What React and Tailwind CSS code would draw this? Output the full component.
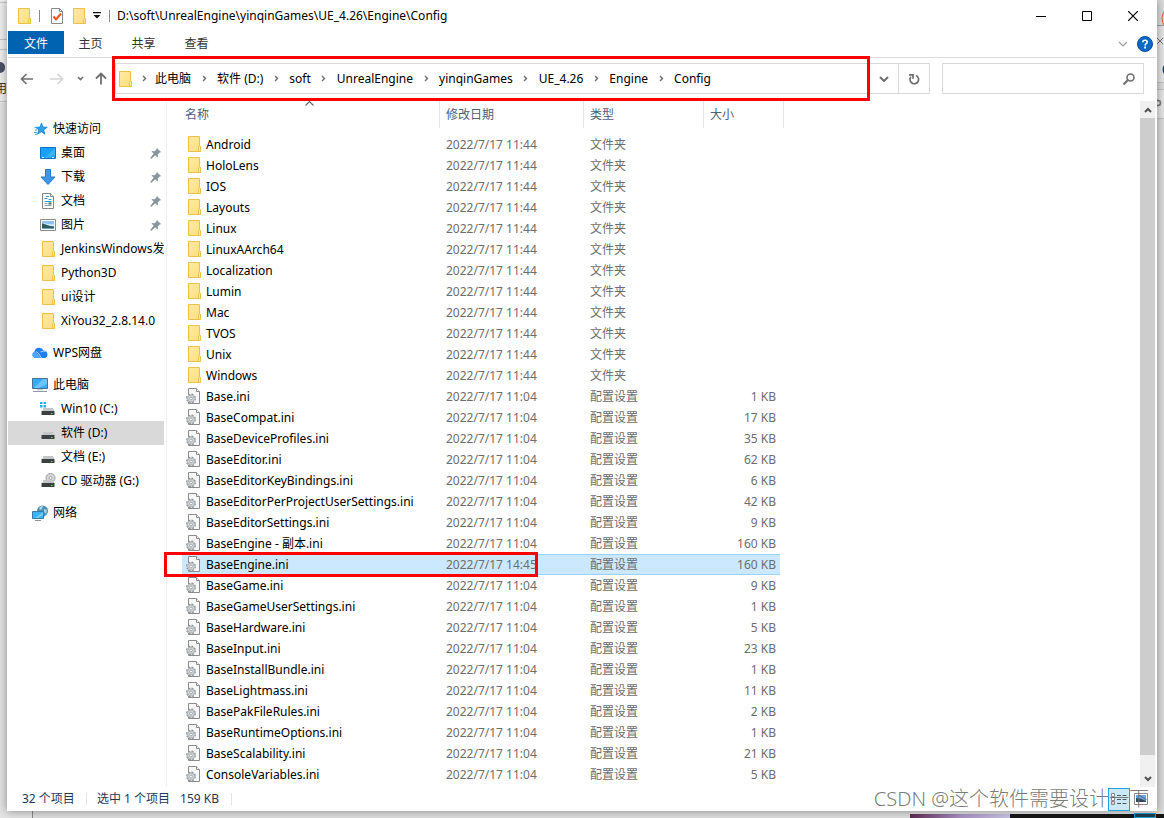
import { useState } from 'react';
import clsx from 'clsx';

const crumbs = ['此电脑', '软件 (D:)', 'soft', 'UnrealEngine', 'yinqinGames', 'UE_4.26', 'Engine', 'Config'];

const folders = [
  'Android', 'HoloLens', 'IOS', 'Layouts', 'Linux', 'LinuxAArch64',
  'Localization', 'Lumin', 'Mac', 'TVOS', 'Unix', 'Windows',
];

const iniFiles = [
  ['Base.ini', 1],
  ['BaseCompat.ini', 17],
  ['BaseDeviceProfiles.ini', 35],
  ['BaseEditor.ini', 62],
  ['BaseEditorKeyBindings.ini', 6],
  ['BaseEditorPerProjectUserSettings.ini', 42],
  ['BaseEditorSettings.ini', 9],
  ['BaseEngine - 副本.ini', 160],
  ['BaseEngine.ini', 160, '2022/7/17 14:45'],
  ['BaseGame.ini', 9],
  ['BaseGameUserSettings.ini', 1],
  ['BaseHardware.ini', 5],
  ['BaseInput.ini', 23],
  ['BaseInstallBundle.ini', 1],
  ['BaseLightmass.ini', 11],
  ['BasePakFileRules.ini', 2],
  ['BaseRuntimeOptions.ini', 1],
  ['BaseScalability.ini', 21],
  ['ConsoleVariables.ini', 5],
];

const rows = [
  ...folders.map((name) => ({ name, date: '2022/7/17 11:44', type: '文件夹', size: '', folder: true })),
  ...iniFiles.map(([name, kb, date]) => ({
    name,
    date: date || '2022/7/17 11:04',
    type: '配置设置',
    size: `${kb} KB`,
  })),
];

function FolderIcon() {
  return (
    <svg width="14" height="16" viewBox="0 0 14 16" className="shrink-0" aria-hidden="true">
      <defs>
        <linearGradient id="folderFill" x1="0" y1="0" x2="1" y2="1">
          <stop offset="0" stopColor="#ffeaa4" />
          <stop offset="1" stopColor="#fddf7c" />
        </linearGradient>
      </defs>
      <path d="M.5.5h11v9l1 1v5H.5z" fill="url(#folderFill)" stroke="#e9c247" />
      <path d="M10.500 15.500v-4l1-2 1 1v5z" fill="#ffe9a0" stroke="#e9c247" />
    </svg>
  );
}

function IniIcon() {
  return (
    <svg width="14" height="16" viewBox="0 0 14 16" className="shrink-0" aria-hidden="true">
      <path d="M2.500.5h8l3 3v12h-11z" fill="#f8f8f9" stroke="#8b8b8b" />
      <path d="M10.500.5v3h3" fill="#fff" stroke="#8b8b8b" />
      <circle cx="5" cy="10.500" r="4.300" fill="#d5d9dc" stroke="#8f9499" strokeWidth="1.300" strokeDasharray="1.900 1.477" />
      <circle cx="5" cy="10.500" r="3.400" fill="#d5d9dc" stroke="#a4a9ad" strokeWidth=".8" />
      <circle cx="5" cy="10.500" r="1.400" fill="#fff" stroke="#8f9499" strokeWidth=".8" />
    </svg>
  );
}

function StarIcon() {
  return (
    <svg width="16" height="16" viewBox="0 0 16 16" className="shrink-0" aria-hidden="true">
      <path d="M9.500 2l1.300 4 4.500.2-3.600 2.600 1.200 4.400-3.600-2.500-3.800 2.500 1.400-4.400-3.300-2.500 4.400-.2z" fill="#2f9fea" stroke="#1583d3" strokeWidth=".8" />
      <path d="M2.500 6.500h3M3 9h2.500M2 11.500h3M3 13.500h2" stroke="#3ba7ee" />
    </svg>
  );
}

function DesktopIcon() {
  return (
    <svg width="16" height="16" viewBox="0 0 16 16" className="shrink-0" aria-hidden="true">
      <path d="M.5 2.500h15v11H.5z" fill="#18a0fb" stroke="#0a74c4" />
      <path d="M15 3v7L7 13h-2z" fill="#3db3ff" />
      <path d="M2 12.500h2M12 12.500h2" stroke="#d6f0ff" />
    </svg>
  );
}

function DownloadIcon() {
  return (
    <svg width="16" height="16" viewBox="0 0 16 16" className="shrink-0" aria-hidden="true">
      <path d="M5.500.5h5v7.500h4.500l-7 7.500-7-7.500h4.500z" fill="#3f97e8" stroke="#2479cc" />
    </svg>
  );
}

function DocumentIcon() {
  return (
    <svg width="16" height="16" viewBox="0 0 16 16" className="shrink-0" aria-hidden="true">
      <path d="M2.500.5h8l3 3v12h-11z" fill="#fff" stroke="#858585" />
      <path d="M10.500.5v3h3" fill="#eee" stroke="#858585" />
      <path d="M6 3.500h3M4.500 5.500h3M8.500 6.500h3M4.500 8.500h7" stroke="#2b97d9" />
      <path d="M4.500 10.500h3M4.500 12.500h7" stroke="#8c9aa5" />
      <path d="M8.500 9.500h3v2h-3z" fill="#35735f" />
    </svg>
  );
}

function PictureIcon() {
  return (
    <svg width="16" height="16" viewBox="0 0 16 16" className="shrink-0" aria-hidden="true">
      <path d="M.5 2.500h15v11H.5z" fill="#fff" stroke="#8d8d8d" />
      <path d="M2 4h12v8H2z" fill="#8fc1f5" />
      <path d="M2 6.500c3-1 5 1 12 1V9H2z" fill="#e4f1fb" />
      <path d="M2 6.500c3 0 5 2.500 12 3V12H2z" fill="#2f5d5d" />
      <path d="M2 11h12v1H2z" fill="#6ba3c9" />
    </svg>
  );
}

function CloudIcon() {
  return (
    <svg width="16" height="16" viewBox="0 0 16 16" className="shrink-0" aria-hidden="true">
      <path d="M3.500 13A3.400 3.400 0 0 1 2.500 6.500 4.800 4.800 0 0 1 11.500 5.500 3.900 3.900 0 0 1 13 13z" fill="#1d7df2" />
      <path d="M9 13l-4.500-6A3.300 3.300 0 0 0 .3 10 3.200 3.200 0 0 0 3.500 13z" fill="#4fa5fb" />
      <path d="M4.500 6.500q2 1 5 6.500M8.500 7q3-1.500 5-.5" fill="none" stroke="#d3e8ff" strokeWidth=".8" />
    </svg>
  );
}

function ComputerIcon() {
  return (
    <svg width="16" height="16" viewBox="0 0 16 16" className="shrink-0" aria-hidden="true">
      <path d="M.5 1.500h15v10H.5z" fill="#35aaf5" stroke="#48728f" />
      <path d="M15 2v5l-8 4h-5L11 2z" fill="#6ac5ff" />
      <path d="M5 12h6v1.500H5z" fill="#c5d0d8" />
      <path d="M1 14.500h14" stroke="#8c9ba6" />
    </svg>
  );
}

function DriveIcon({ windows, disc }) {
  return (
    <svg width="16" height="16" viewBox="0 0 16 16" className="shrink-0" aria-hidden="true">
      {disc && (
        <>
          <circle cx="10.500" cy="5" r="4.500" fill="#dadada" stroke="#999" />
          <circle cx="10.500" cy="5" r="1.500" fill="#fff" stroke="#999" />
        </>
      )}
      <path d="M3.500 7h9.500l1.500 3.500H2z" fill="#c3c6c8" />
      <path d="M1.500 10h13v4h-13z" fill="#3d4043" />
      <path d="M11 12.500h1.500" stroke="#4bea4b" />
      {windows && <path d="M0 1h2.500v2H0zM3.500 1H6v2H3.500zM0 4h2.500v2.500H0zM3.500 4H6v2.500H3.500z" fill="#18b5ea" />}
    </svg>
  );
}

function NetworkIcon() {
  return (
    <svg width="16" height="16" viewBox="0 0 16 16" className="shrink-0" aria-hidden="true">
      <circle cx="10.500" cy="6" r="5.500" fill="#4d91b8" />
      <path d="M7 3q3-3 4-2l-1 3-2 1zM12 4l3 1-1 4-2-2z" fill="#a9d4e6" />
      <path d="M.5 6.500h11v7H.5z" fill="#3bb3fa" stroke="#397ca8" />
      <path d="M11 7v3l-5 3H3z" fill="#73cbff" />
      <path d="M3 15.500h6" stroke="#8498a5" />
    </svg>
  );
}

function PinIcon() {
  return (
    <svg width="11" height="11" viewBox="0 0 11 11" className="shrink-0" aria-hidden="true">
      <path d="M7 .5L10.500 4 9.200 4.500 7.500 6.500V9L5.200 7 1 10.500.5 10 4 5.800 2 3.500h2.500L6.500 2z" fill="#8895a0" stroke="#8895a0" strokeWidth=".7" />
    </svg>
  );
}

const sidebar = [
  {
    label: '快速访问',
    icon: <StarIcon />,
    items: [
      { label: '桌面', icon: <DesktopIcon />, pinned: true },
      { label: '下载', icon: <DownloadIcon />, pinned: true },
      { label: '文档', icon: <DocumentIcon />, pinned: true },
      { label: '图片', icon: <PictureIcon />, pinned: true },
      { label: 'JenkinsWindows发', icon: <FolderIcon /> },
      { label: 'Python3D', icon: <FolderIcon /> },
      { label: 'ui设计', icon: <FolderIcon /> },
      { label: 'XiYou32_2.8.14.0', icon: <FolderIcon /> },
    ],
  },
  { label: 'WPS网盘', icon: <CloudIcon />, items: [] },
  {
    label: '此电脑',
    icon: <ComputerIcon />,
    items: [
      { label: 'Win10 (C:)', icon: <DriveIcon windows /> },
      { label: '软件 (D:)', icon: <DriveIcon />, active: true },
      { label: '文档 (E:)', icon: <DriveIcon /> },
      { label: 'CD 驱动器 (G:)', icon: <DriveIcon disc /> },
    ],
  },
  { label: '网络', icon: <NetworkIcon />, items: [] },
];

function Chevron({ className, d = 'M1 1l4 4 4-4', w = 10, h = 6, stroke = 2 }) {
  return (
    <svg width={w} height={h} viewBox={`0 0 ${w} ${h}`} className={className} fill="none" stroke="currentColor" strokeWidth={stroke} aria-hidden="true">
      <path d={d} />
    </svg>
  );
}

function TitleBar() {
  return (
    <header className="flex h-[31px] shrink-0 items-center">
      <div className="flex items-center pl-[10px]">
        <FolderIcon />
        <span className="ml-[7px] h-3 w-px bg-[#8a8a8a]" />
        <button type="button" aria-label="属性" className="ml-[10px]">
          <svg width="14" height="16" viewBox="0 0 14 16" fill="none" aria-hidden="true">
            <path d="M1.500.5h8l3 3v12h-11z" fill="#fdfdfd" stroke="#8a8a8a" />
            <path d="M9.500.5v3h3" stroke="#8a8a8a" />
            <path d="M3.500 8.500l2.500 3 5-6" stroke="#ea5520" strokeWidth="2" />
          </svg>
        </button>
        <button type="button" aria-label="新建文件夹" className="ml-[9px]"><FolderIcon /></button>
        <button type="button" aria-label="自定义快速访问工具栏" className="ml-[6px]">
          <svg width="8" height="7" viewBox="0 0 8 7" aria-hidden="true">
            <path d="M0 0h8v1.200H0zM.5 3h7L4 6.500z" fill="#111" />
          </svg>
        </button>
        <span className="ml-2 h-3 w-px bg-[#8a8a8a]" />
      </div>
      <h1 className="ml-[7px] flex-1 truncate">D:\soft\UnrealEngine\yinqinGames\UE_4.26\Engine\Config</h1>
      <div className="flex h-full text-black">
        <button type="button" aria-label="最小化" className="grid w-[46px] place-items-center hover:bg-gray-200">
          <svg width="10" height="10" viewBox="0 0 10 10"><path d="M0 5.500h10" stroke="currentColor" /></svg>
        </button>
        <button type="button" aria-label="最大化" className="grid w-[46px] place-items-center hover:bg-gray-200">
          <svg width="10" height="10" viewBox="0 0 10 10"><path d="M.5.5h9v9h-9z" fill="none" stroke="currentColor" /></svg>
        </button>
        <button type="button" aria-label="关闭" className="grid w-[46px] place-items-center hover:bg-red-600 hover:text-white">
          <svg width="10" height="10" viewBox="0 0 10 10"><path d="M0 0l10 10M10 0L0 10" stroke="currentColor" strokeWidth="1.200" /></svg>
        </button>
      </div>
    </header>
  );
}

function Ribbon() {
  return (
    <div className="flex h-[27px] shrink-0 items-start border-b border-[#dadbdc]">
      <button type="button" className="h-[23px] w-14 bg-[#0063b1] pt-0.5 text-white">文件</button>
      {['主页', '共享', '查看'].map((tab) => (
        <button key={tab} type="button" className="h-[26px] w-[53px] text-[#333]">{tab}</button>
      ))}
      <div className="ml-auto flex h-[26px] items-center gap-[9px] pr-[3px]">
        <button type="button" aria-label="展开功能区" className="text-[#a0a0a0]">
          <Chevron stroke={1.2} />
        </button>
        <button type="button" aria-label="帮助">
          <svg width="16" height="16" viewBox="0 0 16 16" aria-hidden="true">
            <circle cx="8" cy="8" r="7.500" fill="#0b6ac8" stroke="#0a4c96" />
            <path d="M5.800 6.200q0-2 2.200-2t2.200 1.800q0 1.200-1.200 1.900-.9.600-.9 1.500" fill="none" stroke="#fff" strokeWidth="1.600" />
            <path d="M7.200 10.600h1.800v1.800H7.200z" fill="#fff" />
          </svg>
        </button>
      </div>
    </div>
  );
}

function AddressBar() {
  const [query, setQuery] = useState('');

  return (
    <div className="flex h-[43px] shrink-0 items-center pb-0.5 pr-3 text-[#6f6f6f]">
      <div className="flex w-[107px] shrink-0 items-center pl-3">
        <button type="button" aria-label="后退">
          <svg width="14" height="12" viewBox="0 0 14 12" fill="none" stroke="currentColor" strokeWidth="1.600"><path d="M13 6H2M6.500 1L1.500 6l5 5" /></svg>
        </button>
        <button type="button" aria-label="前进" className="ml-4 text-[#d5d5d5]">
          <svg width="14" height="12" viewBox="0 0 14 12" fill="none" stroke="currentColor" strokeWidth="1.600"><path d="M0 6h12M7.500 1l5 5-5 5" /></svg>
        </button>
        <button type="button" aria-label="最近浏览的位置" className="ml-[13px]">
          <Chevron w={7} h={5} d="M1 1l2.500 2.500L6 1" stroke={1.6} />
        </button>
        <button type="button" aria-label="上移" className="ml-[11px]">
          <svg width="12" height="13" viewBox="0 0 12 13" fill="none" stroke="currentColor" strokeWidth="1.800"><path d="M6 12.500V2M1 6.500l5-5 5 5" /></svg>
        </button>
      </div>

      <div className="flex h-[31px] min-w-0 flex-1 border border-[#d9d9d9]">
        <nav aria-label="地址" className="relative flex min-w-0 flex-1 items-center pl-[3px] text-black">
          <FolderIcon />
          {crumbs.map((crumb, i) => (
            <span key={crumb} className="flex items-center whitespace-nowrap">
              <span className={clsx('flex justify-center text-[#6f6f6f]', i === 0 ? 'w-[22px]' : 'w-[26px]')}>
                <Chevron w={5} h={7} d="M1 1l2.500 2.500L1 6" stroke={1.4} />
              </span>
              <a href="#">{crumb}</a>
            </span>
          ))}
          <span className="pointer-events-none absolute -inset-y-2 -left-1 right-0 border-[3px] border-[#fe0000]" />
        </nav>
        <button type="button" aria-label="以前的位置" className="grid w-7 place-items-center">
          <Chevron />
        </button>
        <button type="button" aria-label="刷新" className="grid w-[31px] place-items-center border-l border-[#d9d9d9]">
          <svg width="12" height="12" viewBox="0 0 12 12" fill="none" stroke="currentColor" strokeWidth="1.700">
            <path d="M8 2.500A4.300 4.300 0 1 1 2.900 3.800M1 1.800h4v4" />
          </svg>
        </button>
      </div>

      <div className="ml-3 flex h-[31px] w-[202px] items-center border border-[#d9d9d9] pr-2">
        <input
          type="search"
          aria-label="搜索"
          value={query}
          onChange={(e) => setQuery(e.target.value)}
          className="h-full min-w-0 flex-1 px-2 text-black outline-none"
        />
        <svg width="12" height="12" viewBox="0 0 12 12" fill="none" stroke="currentColor" strokeWidth="1.600" aria-hidden="true">
          <circle cx="7.500" cy="4.500" r="3.500" />
          <path d="M5 7l-4.500 4.500" strokeWidth="2" />
        </svg>
      </div>
    </div>
  );
}

function Sidebar() {
  return (
    <nav aria-label="导航窗格" className="flex w-[159px] shrink-0 flex-col gap-2 border-r border-[#f0f0f0] pr-[2px] pt-4 text-black">
      {sidebar.map((group) => (
        <div key={group.label}>
          <a href="#" className="flex h-6 items-center gap-[5px] pl-6">
            {group.icon}
            {group.label}
          </a>
          {group.items.map((item) => (
            <a
              key={item.label}
              href="#"
              className={clsx('flex h-6 items-center gap-[5px] overflow-hidden whitespace-nowrap pl-8 pr-[3px]', item.active && 'bg-[#d9d9d9]')}
            >
              <span className="flex w-4 shrink-0 justify-end">{item.icon}</span>
              <span className="flex-1">{item.label}</span>
              {item.pinned && <PinIcon />}
            </a>
          ))}
        </div>
      ))}
    </nav>
  );
}

function FileTable() {
  const [selected, setSelected] = useState('BaseEngine.ini');

  return (
    <main className="-ml-1 min-w-0 flex-1 overflow-hidden pl-[19px]">
      <table className="w-[602px] table-fixed border-separate border-spacing-0 text-left text-[#6d6d6d]">
        <colgroup>
          <col className="w-[258px]" />
          <col className="w-36" />
          <col className="w-[120px]" />
          <col className="w-[76px]" />
          <col className="w-1" />
        </colgroup>
        <thead className="text-[#4c607a]">
          <tr className="h-[27px]">
            <th className="relative border-r border-[#e5e5e5] p-0 pl-[3px] font-normal">
              名称
              <Chevron className="absolute left-[123px] top-0 text-[#6d6d6d]" w={9} h={5} d="M.5 4.500l4-4 4 4" stroke={1.2} />
            </th>
            <th className="border-r border-[#e5e5e5] p-0 pl-[6px] font-normal">修改日期</th>
            <th className="border-r border-[#e5e5e5] p-0 pl-[6px] font-normal">类型</th>
            <th colSpan={2} className="border-r border-[#e5e5e5] p-0 pl-[6px] font-normal">大小</th>
          </tr>
        </thead>
        <tbody className="before:block before:h-[6px]">
          {rows.map((row) => {
            const active = row.name === selected;
            const cell = active
              ? 'bg-[#cce8ff] shadow-[inset_0_1px_#99d1ff,inset_0_-1px_#99d1ff]'
              : '';
            return (
              <tr key={row.name} className="h-[21px]" onClick={() => setSelected(row.name)}>
                <td className={clsx('relative p-0 text-black', cell)}>
                  <span className={clsx('flex items-center whitespace-nowrap', row.folder ? 'gap-1 pl-[6px]' : 'gap-[6px] pl-1')}>
                    <span className="pb-px">{row.folder ? <FolderIcon /> : <IniIcon />}</span>
                    {row.name}
                  </span>
                  {active && (
                    <span className="pointer-events-none absolute -inset-y-0.5 -left-[18px] z-10 w-[374px] border-[3px] border-[#fe0000]" />
                  )}
                </td>
                <td className={clsx('p-0 pl-[6px]', cell)}>{row.date}</td>
                <td className={clsx('p-0 pl-[6px]', cell)}>{row.type}</td>
                <td className={clsx('p-0 pr-1 text-right', cell)}>{row.size}</td>
                <td className="p-0" />
              </tr>
            );
          })}
        </tbody>
      </table>
    </main>
  );
}

function ScrollBar() {
  return (
    <div className="mr-px flex w-[15px] shrink-0 flex-col bg-[#f0f0f0] text-[#505050]">
      <button type="button" aria-label="向上滚动" className="grid h-[17px] place-items-center">
        <Chevron w={8} h={6} d="M1 5l3-3 3 3" />
      </button>
      <div className="flex-1 bg-[#cdcdcd]" />
      <button type="button" aria-label="向下滚动" className="mt-[15px] grid h-[17px] place-items-center">
        <Chevron w={8} h={6} d="M1 1l3 3 3-3" />
      </button>
    </div>
  );
}

function StatusBar() {
  return (
    <footer className="relative flex h-6 shrink-0 items-center pl-[14px] pr-2 text-[#1e395b]">
      <span className="w-16">32 个项目</span>
      <span className="h-3 w-px bg-[#e4e4e4]" />
      <span className="ml-[10px]">选中 1 个项目</span>
      <span className="ml-[10px] w-[51px]">159 KB</span>
      <span className="h-3 w-px bg-[#e4e4e4]" />
      <div className="ml-auto flex items-center gap-1">
        <button type="button" aria-label="详细信息" className="grid h-[23px] w-[22px] place-items-center border border-[#26a0da] bg-[#cbe8f6]">
          <svg width="16" height="13" viewBox="0 0 16 13" fill="none" aria-hidden="true">
            <path d="M.5.5h3v3h-3zM.5 4.500h3v3h-3zM.5 8.500h3v3h-3z" fill="#fff" stroke="#888" />
            <path d="M1.500 10h1" stroke="#e00" />
            <path d="M6 2.500h4M11.500 2.500h4M6 6.500h4M11.500 6.500h4M6 10.500h4M11.500 10.500h4" stroke="#555" />
          </svg>
        </button>
        <button type="button" aria-label="大缩略图">
          <svg width="14" height="12" viewBox="0 0 14 12" aria-hidden="true">
            <path d="M.5.5h13v11H.5z" fill="#fff" stroke="#8b8b8b" />
            <path d="M2 2h10v7H2z" fill="#6aa8ec" />
            <path d="M2 5q5 0 10 3v1H2z" fill="#2a4e58" />
          </svg>
        </button>
      </div>
      <span className="pointer-events-none absolute right-[7px] whitespace-nowrap text-xl font-light text-[#6a6a6a]/90">
        CSDN @这个软件需要设计一下
      </span>
    </footer>
  );
}

// slivers of the windows that sit behind the explorer
function Backdrop() {
  return (
    <div aria-hidden="true" className="absolute inset-0 overflow-hidden bg-[#e3e3e3]">
      <div className="absolute left-0 top-0 h-[103px] w-2 bg-[#eeeeee]">
        <div className="mt-[2px] h-[38px] border-y border-[#c4c4c4]" />
        <div className="mt-[9px] h-[53px] border-y border-[#c4c4c4]" />
      </div>
      <div className="absolute left-0 top-[62px] h-[11px] w-[5px] rounded-r-full bg-[#4b4f66]" />
      <div className="absolute -left-[5px] top-[81px] text-[#333]">用</div>
      <div className="absolute right-0 top-0 h-full w-2 bg-[#dcdcdc]">
        <div className="h-[26px] border-b border-[#9b9b9b]" />
        <div className="h-[57px] border-b border-[#c4c4c4] bg-[#e6e6e6]" />
        <div className="mt-[6px] h-[30px] border-y border-[#c4c4c4] bg-[#e6e6e6]" />
      </div>
      <svg width="7" height="110" viewBox="0 0 7 110" fill="none" className="absolute right-0 top-0">
        <path d="M8 10q-6 8 0 17" stroke="#e2583e" />
        <path d="M0 38l6 6M6 38l-6 6" stroke="#777" />
        <path d="M7 65q-3 4 0 9z" fill="#17456e" />
        <circle cx="1" cy="103" r="2.500" stroke="#777" strokeWidth="1.500" />
      </svg>
      <div className="absolute inset-x-0 bottom-0 flex h-[7px]">
        <div className="w-[33px] border-r border-[#8a8a8a]" />
        <div className="flex-1 bg-[#dedede]" />
        <div className="mt-[3px] w-[100px] bg-linear-to-r from-[#5e2b55] via-[#a98fc4] to-[#c9c6e4]" />
        <div className="mt-[3px] w-[124px] bg-[#161616]" />
        <div className="mt-[2px] w-[22px] border border-[#26a0da] bg-[#1d3f50]" />
        <div className="mt-[3px] w-2 bg-[#161616]" />
      </div>
    </div>
  );
}

export default function App() {
  return (
    <div className="relative flex h-screen flex-col overflow-hidden px-[7px] pb-[7px] font-['Noto_Sans','Noto_Sans_CJK_SC',sans-serif] text-xs text-black">
      <Backdrop />
      <div className="relative flex min-h-0 flex-1 flex-col bg-white px-px shadow-[0_0_9px_rgba(0,0,0,0.4)]">
        <TitleBar />
        <Ribbon />
        <AddressBar />
        <div className="flex min-h-0 flex-1">
          <Sidebar />
          <FileTable />
          <ScrollBar />
        </div>
        <StatusBar />
      </div>
    </div>
  );
}
